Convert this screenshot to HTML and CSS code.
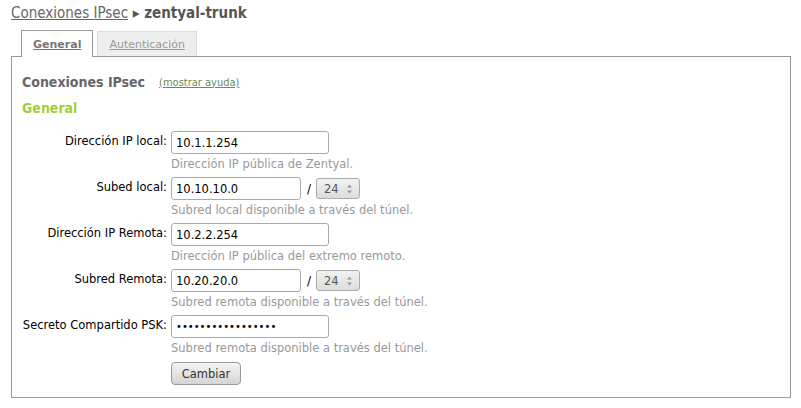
FILE: index.html
```html
<!DOCTYPE html>
<html lang="es">

<head>
    <meta charset="UTF-8">
    <title>Conexiones IPsec</title>
    <link rel="stylesheet" href="styles.css">
</head>

<body>

    <div class="page">
        <h1 class="crumbs"><a href="#">Conexiones IPsec</a> &#9656; zentyal-trunk</h1>

        <ul class="tabs">
            <li class="tab active"><a href="#">General</a></li>
            <li class="tab"><a href="#">Autenticación</a></li>
        </ul>

        <div class="panel">
            <h2 class="title">Conexiones IPsec <a href="#" class="help">(mostrar ayuda)</a></h2>
            <h3 class="section">General</h3>

            <form class="form">
                <label class="lbl" for="localIp">Dirección IP local:</label>
                <div class="field">
                    <input type="text" id="localIp" value="10.1.1.254">
                    <p class="hint">Dirección IP pública de Zentyal.</p>
                </div>

                <label class="lbl" for="localNet">Subed local:</label>
                <div class="field">
                    <div class="net">
                        <input type="text" id="localNet" value="10.10.10.0">
                        <span class="slash">/</span>
                        <span class="mask">24
                            <svg class="spin" width="7" height="12" viewBox="0 0 7 12">
                                <path d="M1 4.5 L3.5 1.5 L6 4.5 Z M1 7.5 L3.5 10.5 L6 7.5 Z" fill="#999" />
                            </svg>
                        </span>
                    </div>
                    <p class="hint">Subred local disponible a través del túnel.</p>
                </div>

                <label class="lbl" for="remoteIp">Dirección IP Remota:</label>
                <div class="field">
                    <input type="text" id="remoteIp" value="10.2.2.254">
                    <p class="hint">Dirección IP pública del extremo remoto.</p>
                </div>

                <label class="lbl" for="remoteNet">Subred Remota:</label>
                <div class="field">
                    <div class="net">
                        <input type="text" id="remoteNet" value="10.20.20.0">
                        <span class="slash">/</span>
                        <span class="mask">24
                            <svg class="spin" width="7" height="12" viewBox="0 0 7 12">
                                <path d="M1 4.5 L3.5 1.5 L6 4.5 Z M1 7.5 L3.5 10.5 L6 7.5 Z" fill="#999" />
                            </svg>
                        </span>
                    </div>
                    <p class="hint">Subred remota disponible a través del túnel.</p>
                </div>

                <label class="lbl" for="psk">Secreto Compartido PSK:</label>
                <div class="field">
                    <input type="password" id="psk" class="secret" value="zentyalsecret1234">
                    <p class="hint">Subred remota disponible a través del túnel.</p>
                </div>

                <div></div>
                <div class="field">
                    <button type="button">Cambiar</button>
                </div>
            </form>
        </div>
    </div>

</body>

</html>
```

FILE: styles.css
```css
* {
    margin: 0;
    padding: 0;
    box-sizing: border-box;
}

body {
    font-family: "DejaVu Sans", sans-serif;
    font-size: 11.5px;
    background-color: #fff;
    color: #000;
}

.page {
    padding: 4px 0 0 11px;
    width: 791px;
}

.crumbs {
    font-family: "DejaVu Sans Condensed", "DejaVu Sans", sans-serif;
    font-size: 15px;
    font-weight: bold;
    color: #555;
    height: 26px;
}

.crumbs a {
    color: #666;
    font-weight: normal;
}

.tabs {
    list-style: none;
    display: flex;
    gap: 4px;
    padding-left: 10px;
    height: 26px;
    align-items: flex-end;
}

.tab {
    border: 1px solid #ddd;
    border-bottom: none;
    background-color: #eee;
    height: 25px;
    padding: 0 11px;
    display: flex;
    align-items: center;
}

.tab a {
    color: #999;
    font-size: 11px;
}

.tab.active {
    background-color: #fff;
    border-color: #999;
    height: 27px;
    margin-bottom: -1px;
    position: relative;
}

.tab.active a {
    color: #777;
    font-weight: bold;
}

.panel {
    border: 1px solid #999;
    height: 342px;
    padding: 10px 10px;
}

.title {
    font-family: "DejaVu Sans Condensed", "DejaVu Sans", sans-serif;
    font-size: 14px;
    color: #666;
    font-weight: bold;
    height: 30px;
    display: flex;
    align-items: center;
    gap: 14px;
}

.help {
    font-family: "DejaVu Sans Condensed", "DejaVu Sans", sans-serif;
    font-size: 11px;
    font-weight: normal;
    color: #6a8a5a;
}

.section {
    font-family: "DejaVu Sans Condensed", "DejaVu Sans", sans-serif;
    font-size: 14px;
    font-weight: bold;
    color: #a3cc3a;
    height: 34px;
    padding-top: 3px;
}

.form {
    display: grid;
    grid-template-columns: 145px 1fr;
    column-gap: 4px;
}

.lbl {
    text-align: right;
    padding-top: 3px;
}

.field {
    height: 46px;
}

.field input {
    width: 158px;
    height: 23px;
    border: 1px solid #aaa;
    border-radius: 3px;
    padding: 2px 4px;
    font-family: "DejaVu Sans", sans-serif;
    font-size: 11.5px;
}

.field input.secret {
    font-size: 10px;
}

.net {
    display: flex;
    align-items: center;
}

.net input {
    width: 130px;
}

.slash {
    padding: 0 5px 0 6px;
    font-size: 12px;
}

.mask {
    display: flex;
    align-items: center;
    justify-content: space-between;
    width: 44px;
    height: 21px;
    padding: 0 6px 0 7px;
    border: 1px solid #aaa;
    border-radius: 3px;
    background: linear-gradient(#f2f2f2, #dcdcdc);
    color: #555;
}

.hint {
    color: #999;
    margin-top: 3px;
}

button {
    font-family: "DejaVu Sans", sans-serif;
    font-size: 11.5px;
    color: #333;
    width: 70px;
    height: 23px;
    margin-top: 1px;
    border: 1px solid #999;
    border-radius: 4px;
    background: linear-gradient(#f4f4f4, #d4d4d4);
}
```
